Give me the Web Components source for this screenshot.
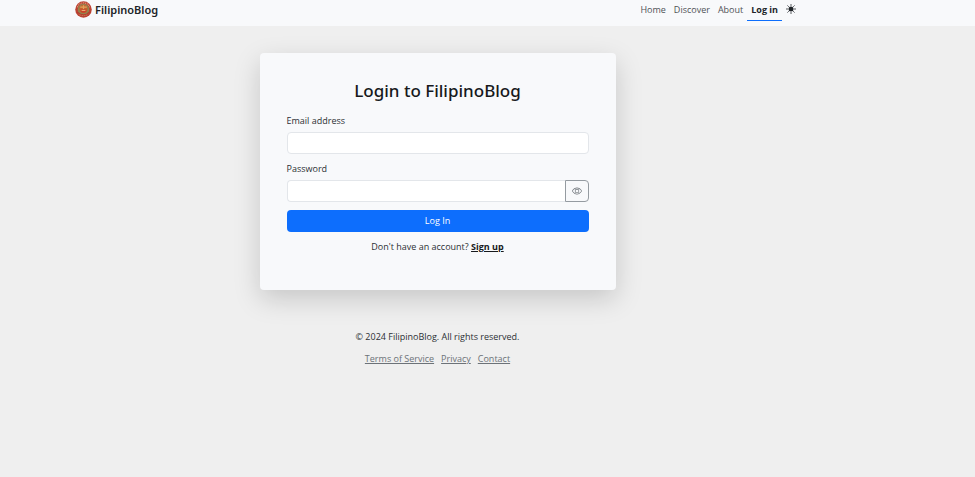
<!DOCTYPE html>
<html lang="en">
<head>
<meta charset="utf-8">
<meta name="viewport" content="width=device-width, initial-scale=1">
<title>FilipinoBlog - Log in</title>
<style>
html { background: #efefef; }
body { margin: 0; font: 9px/14px "Segoe UI", "Open Sans", "Noto Sans", sans-serif; color: #2c3034; }
</style>
</head>
<body>
<blog-page>
  <site-header slot="header">
    <nav-link href="#home">Home</nav-link>
    <nav-link href="#discover">Discover</nav-link>
    <nav-link href="#about">About</nav-link>
    <nav-link href="#login" active>Log in</nav-link>
  </site-header>
  <login-card></login-card>
  <site-footer slot="footer"></site-footer>
</blog-page>

<script>
const define = (name, html, setup) => {
  const template = document.createElement('template');
  template.innerHTML = html;
  customElements.define(name, class extends HTMLElement {
    constructor() {
      super();
      this.attachShadow({ mode: 'open' }).append(template.content.cloneNode(true));
      if (setup) setup(this, this.shadowRoot);
    }
  });
};

define('blog-page', `
<style>
:host { display: flex; flex-direction: column; }
.header { background: #f8f9fb; padding-right: 100px; }
main { display: flex; justify-content: center; padding: 27px 100px 40px 0; }
.footer { padding-right: 100px; }
</style>
<div class="header"><slot name="header"></slot></div>
<main><slot></slot></main>
<div class="footer"><slot name="footer"></slot></div>`);

define('site-logo', `
<style>
:host { display: block; width: 17px; height: 17px; }
svg { display: block; width: 100%; height: 100%; }
</style>
<svg viewBox="0 0 36 36" aria-hidden="true">
  <circle cx="18" cy="18" r="17.500" fill="#bd4435"/>
  <path d="M5 13Q9 4 18 4t13 9" fill="none" stroke="#e0a07c" stroke-width="2.500" stroke-dasharray="2 2"/>
  <circle cx="18" cy="18" r="12" fill="#8d8a52"/>
  <circle cx="18" cy="17" r="9" fill="#c4622f"/>
  <path d="M11 13h14M18 9v8" stroke="#e3a35c" stroke-width="2.500"/>
  <path d="M12 18h12v5q-6 4-12 0z" fill="#c9432d"/>
  <path d="M14 20h8" stroke="#f0b978" stroke-width="2" fill="none"/>
  <path d="M3 23q5 11 15 11t15-11l-5 1q-4 4-10 4t-10-4z" fill="#b5402f"/>
  <path d="M8 28q4 3 10 3t10-3" fill="none" stroke="#d98f6a" stroke-width="2" stroke-dasharray="2 2"/>
</svg>`);

define('site-header', `
<style>
:host { display: block; }
header { display: flex; justify-content: space-between; align-items: flex-start; max-width: 725px; margin: 0 auto; padding-bottom: 5px; }
.brand { display: flex; align-items: center; gap: 3px; margin-top: 1px; color: #202428; font-family: "Segoe UI", "Noto Sans", sans-serif; font-size: 11px; font-weight: 600; line-height: 17px; text-decoration: none; }
nav { display: flex; align-items: flex-start; }
button { display: flex; align-items: center; margin: 0; padding: 4px; border: 0; background: none; color: #212529; }
svg { display: block; width: 10px; height: 10px; }
</style>
<header>
  <a class="brand" href="#home"><site-logo></site-logo><span>FilipinoBlog</span></a>
  <nav aria-label="Main">
    <slot></slot>
    <button type="button" aria-label="Toggle theme">
      <svg viewBox="0 0 16 16" aria-hidden="true"><circle cx="8" cy="8" r="4" fill="currentColor"/><path d="M8 .5v2M8 13.500v2M.5 8h2M13.500 8h2M2.700 2.700l1.400 1.400M11.900 11.900l1.400 1.400M2.700 13.300l1.400-1.400M11.900 4.100l1.400-1.400" stroke="currentColor" stroke-width="1.200" stroke-linecap="round"/></svg>
    </button>
  </nav>
</header>`);

define('nav-link', `
<style>
:host { display: block; }
a { display: block; padding: 3px 4px; border-bottom: 1px solid transparent; color: #4f5256; text-decoration: none; }
:host([active]) a { border-color: #0d6efd; color: #212529; font-weight: 700; }
</style>
<a><slot></slot></a>`, (host, root) => {
  root.querySelector('a').href = host.getAttribute('href') || '#';
});

define('login-card', `
<style>
:host { display: block; box-sizing: border-box; width: 100%; max-width: 356px; padding: 27px 27px 36px; border-radius: 4px; background: #f8f9fb; box-shadow: 0 9px 27px rgba(0, 0, 0, .17); }
h1 { margin: 0 0 12px; color: #17191c; font-family: "Segoe UI", "Noto Sans", sans-serif; font-size: 17px; line-height: 22px; font-weight: 500; text-align: center; }
form { display: flex; flex-direction: column; gap: 8px; }
.field { display: flex; flex-direction: column; gap: 4px; }
.group { display: flex; }
input { box-sizing: border-box; flex: 1; min-width: 0; height: 22px; margin: 0; padding: 3px 7px; border: 1px solid #e3e6ea; border-radius: 4px; background: #fff; color: #212529; font: inherit; outline: 0; }
.joined { border-right: 0; border-radius: 4px 0 0 4px; }
.eye { display: flex; align-items: center; justify-content: center; box-sizing: border-box; width: 24px; height: 22px; margin: 0; padding: 0; border: 1px solid #959ba1; border-radius: 0 4px 4px 0; background: #f8f9fb; color: #6c7278; }
svg { display: block; width: 10px; height: 10px; }
.submit { height: 22px; margin: 0; padding: 0; border: 0; border-radius: 4px; background: #0d6efd; color: #fff; font: inherit; }
p { margin: 0; text-align: center; }
p a { color: #17191c; font-weight: 700; }
</style>
<h1>Login to FilipinoBlog</h1>
<form>
  <div class="field"><label for="email">Email address</label><div class="group"><input id="email" type="email" autocomplete="username"></div></div>
  <div class="field"><label for="password">Password</label><div class="group"><input class="joined" id="password" type="password" autocomplete="current-password"><button class="eye" type="button" aria-label="Show password"><svg viewBox="0 0 16 16" fill="currentColor" aria-hidden="true"><path d="M16 8s-3-5.500-8-5.500S0 8 0 8s3 5.500 8 5.500S16 8 16 8M1.173 8a13 13 0 0 1 1.660-2.043C4.120 4.668 5.880 3.500 8 3.500s3.879 1.168 5.168 2.457A13 13 0 0 1 14.828 8q-.086.130-.195.288c-.335.480-.830 1.120-1.465 1.755C11.879 11.332 10.119 12.500 8 12.500s-3.879-1.168-5.168-2.457A13 13 0 0 1 1.172 8z"/><path d="M8 5.500a2.500 2.500 0 1 0 0 5 2.500 2.500 0 0 0 0-5M4.500 8a3.500 3.500 0 1 1 7 0 3.500 3.500 0 0 1-7 0"/></svg></button></div></div>
  <button class="submit" type="submit">Log In</button>
  <p>Don't have an account? <a href="#signup">Sign up</a></p>
</form>`, (host, root) => {
  root.querySelector('form').addEventListener('submit', event => event.preventDefault());
  root.querySelector('.eye').addEventListener('click', () => {
    const field = root.querySelector('#password');
    field.type = field.type === 'password' ? 'text' : 'password';
  });
});

define('site-footer', `
<style>
:host { display: block; }
footer { display: flex; flex-direction: column; align-items: center; gap: 8px; }
p { margin: 0; }
nav { display: flex; gap: 7px; }
a { color: #6c7278; }
</style>
<footer>
  <p>© 2024 FilipinoBlog. All rights reserved.</p>
  <nav aria-label="Footer"><a href="#terms">Terms of Service</a><a href="#privacy">Privacy</a><a href="#contact">Contact</a></nav>
</footer>`);
</script>
</body>
</html>
